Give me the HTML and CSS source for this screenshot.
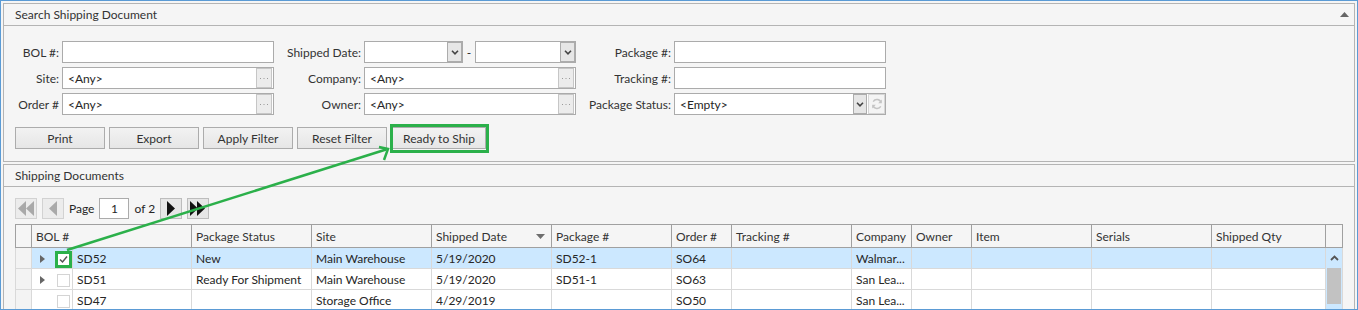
FILE: index.html
```html
<!DOCTYPE html>
<html lang="en">
<head>
  <meta charset="UTF-8">
  <title>Shipping Documents</title>
  <link rel="stylesheet" href="styles.css">
</head>
<body>
  <div class="frame">
    <!-- Search panel -->
    <div class="panel">
      <div class="panel-header">
        <span>Search Shipping Document</span>
        <svg class="collapse" width="9" height="5" viewBox="0 0 9 5"><polygon points="0,5 4.5,0 9,5" fill="#666"/></svg>
      </div>
      <div class="panel-body">
        <div class="search-form">
          <label>BOL #:</label>
          <div class="field"></div>
          <label>Shipped Date:</label>
          <div class="date-range">
            <div class="field date">
              <span class="value"></span>
              <span class="drop"><svg width="8" height="5" viewBox="0 0 8 5"><polyline points="1,0.8 4,3.8 7,0.8" fill="none" stroke="#444" stroke-width="1.6"/></svg></span>
            </div>
            <span class="dash">-</span>
            <div class="field date">
              <span class="value"></span>
              <span class="drop"><svg width="8" height="5" viewBox="0 0 8 5"><polyline points="1,0.8 4,3.8 7,0.8" fill="none" stroke="#444" stroke-width="1.6"/></svg></span>
            </div>
          </div>
          <label>Package #:</label>
          <div class="field"></div>

          <label>Site:</label>
          <div class="field">
            <span class="value">&lt;Any&gt;</span>
            <span class="lookup"><svg width="10" height="2" viewBox="0 0 10 2"><rect x="1" y="0" width="1" height="1" fill="#999"/><rect x="4.5" y="0" width="1" height="1" fill="#999"/><rect x="8" y="0" width="1" height="1" fill="#999"/></svg></span>
          </div>
          <label>Company:</label>
          <div class="field">
            <span class="value">&lt;Any&gt;</span>
            <span class="lookup"><svg width="10" height="2" viewBox="0 0 10 2"><rect x="1" y="0" width="1" height="1" fill="#999"/><rect x="4.5" y="0" width="1" height="1" fill="#999"/><rect x="8" y="0" width="1" height="1" fill="#999"/></svg></span>
          </div>
          <label>Tracking #:</label>
          <div class="field"></div>

          <label>Order #</label>
          <div class="field">
            <span class="value">&lt;Any&gt;</span>
            <span class="lookup"><svg width="10" height="2" viewBox="0 0 10 2"><rect x="1" y="0" width="1" height="1" fill="#999"/><rect x="4.5" y="0" width="1" height="1" fill="#999"/><rect x="8" y="0" width="1" height="1" fill="#999"/></svg></span>
          </div>
          <label>Owner:</label>
          <div class="field">
            <span class="value">&lt;Any&gt;</span>
            <span class="lookup"><svg width="10" height="2" viewBox="0 0 10 2"><rect x="1" y="0" width="1" height="1" fill="#999"/><rect x="4.5" y="0" width="1" height="1" fill="#999"/><rect x="8" y="0" width="1" height="1" fill="#999"/></svg></span>
          </div>
          <label>Package Status:</label>
          <div class="field">
            <span class="value">&lt;Empty&gt;</span>
            <span class="drop narrow"><svg width="8" height="5" viewBox="0 0 8 5"><polyline points="1,0.8 4,3.8 7,0.8" fill="none" stroke="#444" stroke-width="1.6"/></svg></span>
            <span class="refresh"><svg width="12" height="12" viewBox="0 0 12 12"><path d="M10 4.5 A4.3 4.3 0 0 0 2.2 3.6" fill="none" stroke="#c4c4c4" stroke-width="1.4"/><polygon points="10.8,1.5 10.8,5.3 7.2,5.3" fill="#c4c4c4"/><path d="M2 7.5 A4.3 4.3 0 0 0 9.8 8.4" fill="none" stroke="#c4c4c4" stroke-width="1.4"/><polygon points="1.2,10.5 1.2,6.7 4.8,6.7" fill="#c4c4c4"/></svg></span>
          </div>
        </div>

        <div class="actions">
          <button type="button" class="btn">Print</button>
          <button type="button" class="btn">Export</button>
          <button type="button" class="btn">Apply Filter</button>
          <button type="button" class="btn">Reset Filter</button>
          <button type="button" class="btn btn-marked">Ready to Ship</button>
        </div>
      </div>
    </div>

    <!-- Results panel -->
    <div class="panel panel-grow">
      <div class="panel-header">
        <span>Shipping Documents</span>
      </div>
      <div class="panel-body results">
        <div class="pager">
          <span class="pg-btn disabled"><svg width="16" height="15" viewBox="0 0 16 15"><polygon points="8,0 8,15 0,7.5" fill="#a9a9a9"/><polygon points="16,0 16,15 8,7.5" fill="#a9a9a9"/></svg></span>
          <span class="pg-btn disabled"><svg width="8" height="15" viewBox="0 0 8 15"><polygon points="8,0 8,15 0,7.5" fill="#a9a9a9"/></svg></span>
          <span class="pg-text">Page</span>
          <span class="pg-input">1</span>
          <span class="pg-text">of 2</span>
          <span class="pg-btn"><svg width="8" height="15" viewBox="0 0 8 15"><polygon points="0,0 0,15 8,7.5" fill="#111"/></svg></span>
          <span class="pg-btn"><svg width="16" height="15" viewBox="0 0 16 15"><polygon points="0,0 0,15 8,7.5" fill="#111"/><polygon points="7,0 7,15 15,7.5" fill="#111"/></svg></span>
        </div>

        <table class="grid">
          <colgroup>
            <col style="width:16px">
            <col style="width:41px">
            <col style="width:119px">
            <col style="width:120px">
            <col style="width:120px">
            <col style="width:120px">
            <col style="width:120px">
            <col style="width:60px">
            <col style="width:120px">
            <col style="width:60px">
            <col style="width:60px">
            <col style="width:120px">
            <col style="width:120px">
            <col style="width:114px">
            <col style="width:17px">
          </colgroup>
          <thead>
            <tr>
              <th class="ind"></th>
              <th colspan="2">BOL #</th>
              <th>Package Status</th>
              <th>Site</th>
              <th><div class="th-sort"><span>Shipped Date</span><svg width="9" height="5" viewBox="0 0 9 5"><polygon points="0,0 9,0 4.5,5" fill="#6e6e6e"/></svg></div></th>
              <th>Package #</th>
              <th>Order #</th>
              <th>Tracking #</th>
              <th>Company</th>
              <th>Owner</th>
              <th>Item</th>
              <th>Serials</th>
              <th>Shipped Qty</th>
              <th class="scroll-head"></th>
            </tr>
          </thead>
          <tbody>
            <tr class="selected">
              <td class="ind"></td>
              <td class="sel"><span class="expander"></span><span class="check checked marked"><svg width="11" height="11" viewBox="0 0 11 11"><polyline points="2,5.5 4.5,8 9,2.5" fill="none" stroke="#555" stroke-width="1.5"/></svg></span></td>
              <td>SD52</td>
              <td>New</td>
              <td>Main Warehouse</td>
              <td>5/19/2020</td>
              <td>SD52-1</td>
              <td>SO64</td>
              <td></td>
              <td>Walmar...</td>
              <td></td>
              <td></td>
              <td></td>
              <td></td>
              <td class="scroll" rowspan="3">
                <div class="scroll-up"><svg width="9" height="6" viewBox="0 0 9 6"><polyline points="1,5 4.5,1.5 8,5" fill="none" stroke="#555" stroke-width="1.8"/></svg></div>
                <div class="thumb"></div>
              </td>
            </tr>
            <tr>
              <td class="ind"></td>
              <td class="sel"><span class="expander"></span><span class="check"></span></td>
              <td>SD51</td>
              <td>Ready For Shipment</td>
              <td>Main Warehouse</td>
              <td>5/19/2020</td>
              <td>SD51-1</td>
              <td>SO63</td>
              <td></td>
              <td>San Lea...</td>
              <td></td>
              <td></td>
              <td></td>
              <td></td>
            </tr>
            <tr>
              <td class="ind"></td>
              <td class="sel"><span class="expander hidden"></span><span class="check"></span></td>
              <td>SD47</td>
              <td></td>
              <td>Storage Office</td>
              <td>4/29/2019</td>
              <td></td>
              <td>SO50</td>
              <td></td>
              <td>San Lea...</td>
              <td></td>
              <td></td>
              <td></td>
              <td></td>
            </tr>
          </tbody>
        </table>
      </div>
    </div>
  </div>

  <!-- annotation arrow from the checked row to the button -->
  <svg class="annotation" width="1358" height="310" viewBox="0 0 1358 310">
    <line x1="67" y1="250" x2="386" y2="149.5" stroke="#2bb04a" stroke-width="2.5"/>
    <polyline points="379,147 388,149 384,160" fill="none" stroke="#2bb04a" stroke-width="2.5"/>
  </svg>
</body>
</html>
```

FILE: styles.css
```css
body {
  margin: 0;
  position: relative;
  font-family: Lato, "Noto Sans", sans-serif;
  font-size: 12px;
  color: #262626;
  background: #fff;
  overflow: hidden;
}
.frame {
  width: 1358px;
  height: 310px;
  box-sizing: border-box;
  border: 1px solid #5b9bd5;
  padding: 2px;
  background: #f5f5f5;
  display: flex;
  flex-direction: column;
  gap: 2px;
  overflow: hidden;
}
.panel {
  border: 1px solid #b4b4b4;
  background: #f5f5f5;
  flex-shrink: 0;
}
.panel-grow {
  flex: 1;
}
.panel-header {
  height: 21px;
  border-bottom: 1px solid #b4b4b4;
  display: flex;
  align-items: center;
  justify-content: space-between;
  padding: 0 5px 0 11px;
  color: #333;
}
.panel-body {
  padding: 15px 11px 12px;
}
.search-form {
  display: grid;
  grid-template-columns: 47px 212px 90px 212px 98px 212px;
  grid-auto-rows: 22px;
  row-gap: 4px;
}
.search-form label {
  text-align: right;
  padding-right: 3px;
  align-self: center;
  color: #333;
}
.field {
  height: 22px;
  box-sizing: border-box;
  border: 1px solid #ababab;
  background: #fff;
  display: flex;
  align-items: stretch;
}
.field .value {
  flex: 1;
  padding-left: 5px;
  display: flex;
  align-items: center;
}
.date-range {
  display: flex;
  align-items: center;
}
.field.date {
  width: 99px;
}
.date-range .field.date:last-child {
  width: 101px;
}
.dash {
  width: 12px;
  text-align: center;
}
.drop,
.lookup,
.refresh {
  box-sizing: border-box;
  display: flex;
  align-items: center;
  justify-content: center;
}
.drop {
  width: 15px;
  border: 1px solid #acacac;
  background: #e6e6e6;
}
.drop.narrow {
  width: 14px;
  margin-right: 1px;
}
.lookup {
  width: 16px;
  margin-right: 1px;
  border: 1px solid #c6c6c6;
  background: #ececec;
  padding-top: 1px;
}
.refresh {
  width: 17px;
  border: 1px solid #d6d6d6;
  background: #f4f4f4;
}
.actions {
  display: flex;
  gap: 4px;
  margin-top: 12px;
}
.btn {
  width: 90px;
  height: 22px;
  font-family: inherit;
  font-size: 12px;
  color: #333;
  background: linear-gradient(#f2f2f2, #e6e6e6);
  border: 1px solid #acacac;
  padding: 0;
}
.btn-marked {
  position: relative;
  width: 94px;
  margin-left: 1px;
}
.btn-marked::after {
  content: "";
  position: absolute;
  top: -4px;
  bottom: -5px;
  left: -3px;
  right: -4px;
  border: 3px solid #2bb04a;
}
.results {
  padding-top: 11px;
}
.pager {
  display: flex;
  align-items: center;
  gap: 5px;
  height: 21px;
}
.pg-btn {
  width: 22px;
  height: 21px;
  box-sizing: border-box;
  border: 1px solid #bdbdbd;
  background: #e6e6e6;
  display: flex;
  align-items: center;
  justify-content: center;
}
.pg-btn.disabled {
  border-color: #d2d2d2;
  background: #ececec;
}
.pg-input {
  width: 30px;
  height: 21px;
  box-sizing: border-box;
  border: 1px solid #ababab;
  background: #fff;
  display: flex;
  align-items: center;
  justify-content: center;
}
.grid {
  margin-top: 5px;
  border-collapse: collapse;
  table-layout: fixed;
  width: 1327px;
  border: 1px solid #a0a0a0;
}
.grid th {
  height: 22px;
  padding: 0 4px;
  font-weight: normal;
  text-align: left;
  color: #333;
  background: #f5f5f5;
  border-right: 1px solid #a0a0a0;
  border-bottom: 1px solid #a0a0a0;
  white-space: nowrap;
  overflow: hidden;
}
.th-sort {
  display: flex;
  align-items: center;
  justify-content: space-between;
  padding-right: 2px;
}
.grid td {
  height: 20px;
  padding: 0 4px;
  border: 1px solid #d9d9d9;
  background: #fff;
  white-space: nowrap;
  overflow: hidden;
}
.grid td.ind {
  background: #f3f3f3;
}
.grid tr.selected td {
  background: #cce8ff;
}
.grid tr.selected td.ind {
  background: #f3f3f3;
}
.grid td.sel {
  padding: 0 0 0 8px;
}
.sel .expander {
  display: inline-block;
  vertical-align: middle;
  width: 0;
  height: 0;
  border-left: 5px solid #666;
  border-top: 4px solid transparent;
  border-bottom: 4px solid transparent;
  margin-right: 12px;
}
.sel .expander.hidden {
  visibility: hidden;
}
.check {
  display: inline-flex;
  vertical-align: middle;
  align-items: center;
  justify-content: center;
  width: 13px;
  height: 13px;
  box-sizing: border-box;
  border: 1px solid #d4d4d4;
  background: #fff;
}
.check.marked {
  box-shadow: 0 0 0 2px #2bb04a;
  border-color: #2bb04a;
}
.grid td.scroll {
  padding: 0;
  vertical-align: top;
  background: #f0f0f0;
  border-bottom: none;
}
.scroll-up {
  height: 20px;
  display: flex;
  align-items: center;
  justify-content: center;
}
.thumb {
  height: 36px;
  margin: 0 1px;
  background: #c2c2c2;
}
.annotation {
  position: absolute;
  top: 0;
  left: 0;
  pointer-events: none;
}
```
